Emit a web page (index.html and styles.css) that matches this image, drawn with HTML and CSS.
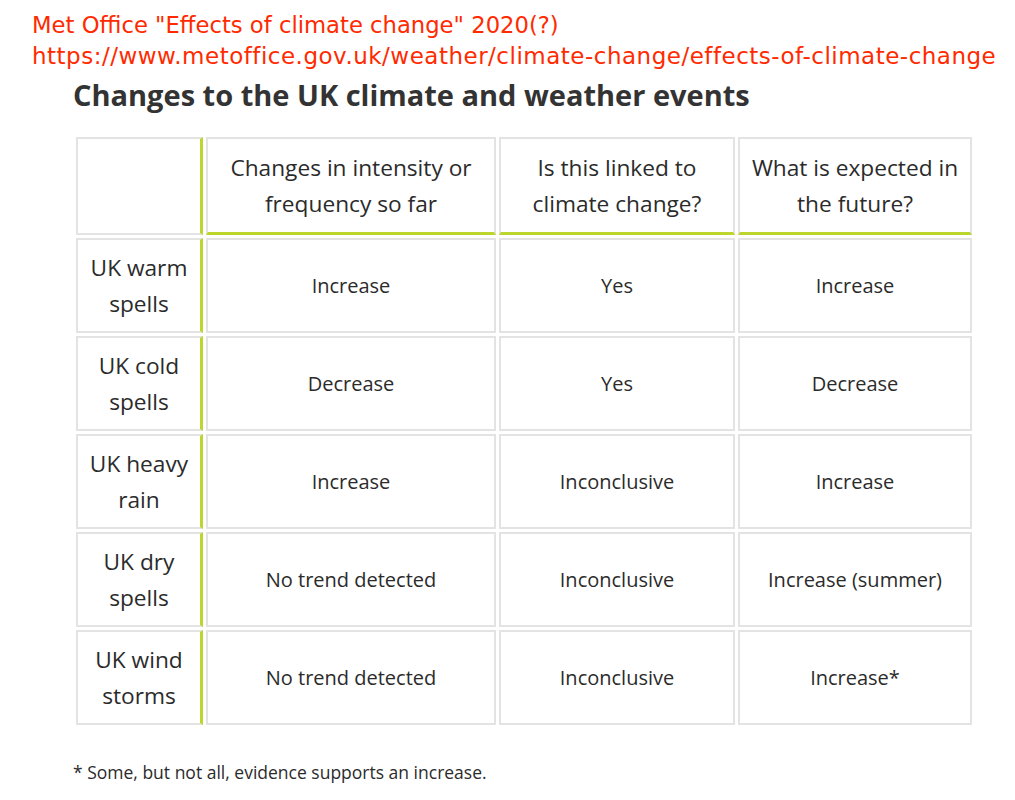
FILE: index.html
```html
<!DOCTYPE html>
<html lang="en">
<head>
<meta charset="utf-8">
<title>Changes to the UK climate and weather events</title>
<link rel="stylesheet" href="styles.css">
</head>
<body>
<div class="source">
  <div class="source-title">Met Office "Effects of climate change" 2020(?)</div>
  <div class="source-url">https://www.metoffice.gov.uk/weather/climate-change/effects-of-climate-change</div>
</div>
<main class="content">
  <h2 class="title">Changes to the UK climate and weather events</h2>
  <table class="climate">
    <colgroup>
      <col class="c1"><col class="c2"><col class="c3"><col class="c4">
    </colgroup>
    <thead>
      <tr>
        <th class="corner"></th>
        <th>Changes in intensity or frequency so far</th>
        <th>Is this linked to climate change?</th>
        <th>What is expected in the future?</th>
      </tr>
    </thead>
    <tbody>
      <tr><th>UK warm spells</th><td>Increase</td><td>Yes</td><td>Increase</td></tr>
      <tr><th>UK cold spells</th><td>Decrease</td><td>Yes</td><td>Decrease</td></tr>
      <tr><th>UK heavy rain</th><td>Increase</td><td>Inconclusive</td><td>Increase</td></tr>
      <tr><th>UK dry spells</th><td>No trend detected</td><td>Inconclusive</td><td>Increase (summer)</td></tr>
      <tr><th>UK wind storms</th><td>No trend detected</td><td>Inconclusive</td><td>Increase*</td></tr>
    </tbody>
  </table>
  <p class="note">* Some, but not all, evidence supports an increase.</p>
</main>
</body>
</html>
```

FILE: styles.css
```css
html, body {
  margin: 0;
  padding: 0;
  background: #ffffff;
}

.source {
  padding: 10px 0 0 32px;
  font-family: "DejaVu Sans", sans-serif;
  line-height: 31px;
  color: #ff2a00;
  white-space: nowrap;
}

.source-title {
  font-size: 22.7px;
}

.source-url {
  font-size: 23px;
  letter-spacing: 0.5px;
}

.content {
  padding-left: 73px;
  font-family: "Open Sans", sans-serif;
  color: #2b2b2b;
}

.title {
  margin: 5px 0 0 0;
  font-size: 29px;
  line-height: 36px;
  font-weight: 700;
  color: #333333;
}

.climate {
  margin-top: 21px;
  border-collapse: separate;
  border-spacing: 3px;
  table-layout: fixed;
  width: 902px;
  line-height: 36px;
}

.c1 { width: 127px; }
.c2 { width: 290px; }
.c3 { width: 236px; }
.c4 { width: 234px; }

.climate th,
.climate td {
  border: 2px solid #e3e3e3;
  text-align: center;
  vertical-align: middle;
  font-weight: 400;
  box-sizing: border-box;
}

.climate th {
  font-size: 22.7px;
  padding: 9px 6px;
}

.climate td {
  font-size: 20px;
  padding: 9px 10px;
}

.climate thead th {
  border-bottom: 3px solid #bdd62e;
  height: 98px;
}

.climate tbody tr {
  height: 95px;
}

.climate tbody th,
.climate thead th.corner {
  border-right: 3px solid #bdd62e;
}

.climate thead th.corner {
  border-bottom: 2px solid #e3e3e3;
}

.note {
  margin: 32px 0 0 0;
  font-size: 17.5px;
  line-height: 24px;
  color: #2b2b2b;
}
```
